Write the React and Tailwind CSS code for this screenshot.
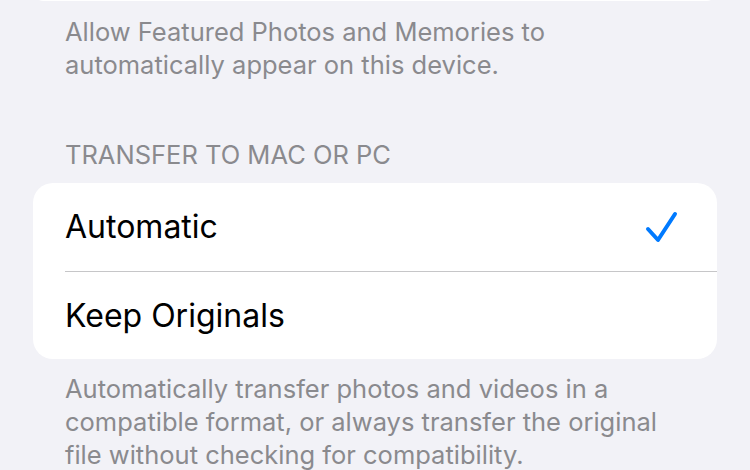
export default function App() {
  return (
    <div
      className="w-[750px] h-[470px] overflow-hidden bg-[#f2f2f7] px-[33px] antialiased"
      style={{ fontFamily: "Inter, 'Noto Sans', sans-serif" }}
    >
      {/* bottom of the previous card */}
      <div className="h-[21px] -mt-[20px] rounded-[20px] bg-white" />

      <p className="mt-[14px] px-[32px] text-[25.5px] leading-[33px] text-[#8a8a8e]">
        Allow Featured Photos and Memories to
        <br />
        automatically appear on this device.
      </p>

      <div className="mt-[57px] px-[32px] text-[25.5px] leading-[33px] uppercase text-[#8a8a8e]">
        Transfer to Mac or PC
      </div>

      {/* options */}
      <div className="mt-[12px] rounded-[20px] bg-white">
        <div className="flex h-[88px] items-center justify-between pl-[32px] pr-[37px]">
          <span className="text-[32px] text-black">Automatic</span>
          <svg width="36" height="36" viewBox="0 0 36 36" fill="none">
            <path
              d="M4 20 L14 31 L31 5"
              stroke="#007aff"
              strokeWidth="4"
              strokeLinecap="round"
              strokeLinejoin="round"
            />
          </svg>
        </div>
        <div className="ml-[32px] h-px bg-[#c6c6c8]" />
        <div className="flex h-[87px] items-center pl-[32px]">
          <span className="text-[32px] text-black">Keep Originals</span>
        </div>
      </div>

      <p className="mt-[13px] px-[32px] text-[25.5px] leading-[33px] text-[#8a8a8e]">
        Automatically transfer photos and videos in a
        <br />
        compatible format, or always transfer the original
        <br />
        file without checking for compatibility.
      </p>
    </div>
  );
}
